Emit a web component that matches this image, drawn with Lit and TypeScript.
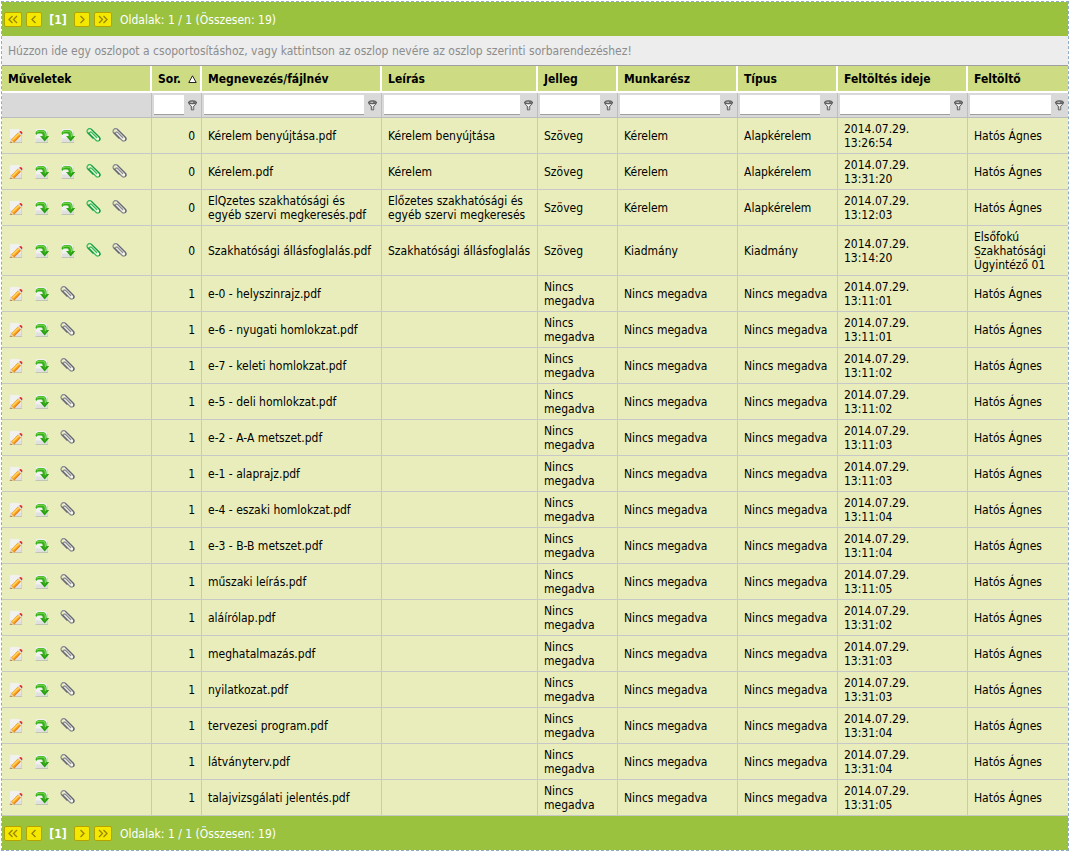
import { LitElement, html, css, svg, nothing } from "lit";
import { customElement, property } from "lit/decorators.js";

interface FileRow {
  order: number;
  name: string;
  description: string;
  kind: string;
  part: string;
  type: string;
  date: string;
  time: string;
  uploader: string;
}

interface Column {
  label: string;
  width: number;
  sorted?: boolean;
  filter?: boolean;
}

const COLUMNS: Column[] = [
  { label: "Műveletek", width: 150 },
  { label: "Sor.", width: 50, sorted: true, filter: true },
  { label: "Megnevezés/fájlnév", width: 180, filter: true },
  { label: "Leírás", width: 156, filter: true },
  { label: "Jelleg", width: 80, filter: true },
  { label: "Munkarész", width: 120, filter: true },
  { label: "Típus", width: 100, filter: true },
  { label: "Feltöltés ideje", width: 130, filter: true },
  { label: "Feltöltő", width: 100, filter: true },
];

const USER = "Hatós Ágnes";
const NONE = "Nincs megadva";

const main = (name: string, description: string, part: string, type: string, time: string, uploader = USER): FileRow => ({
  order: 0, name, description, kind: "Szöveg", part, type, date: "2014.07.29.", time, uploader,
});

const attachment = (name: string, time: string): FileRow => ({
  order: 1, name, description: "", kind: NONE, part: NONE, type: NONE, date: "2014.07.29.", time, uploader: USER,
});

const ROWS: FileRow[] = [
  main("Kérelem benyújtása.pdf", "Kérelem benyújtása", "Kérelem", "Alapkérelem", "13:26:54"),
  main("Kérelem.pdf", "Kérelem", "Kérelem", "Alapkérelem", "13:31:20"),
  main("ElQzetes szakhatósági és egyéb szervi megkeresés.pdf", "Előzetes szakhatósági és egyéb szervi megkeresés", "Kérelem", "Alapkérelem", "13:12:03"),
  main("Szakhatósági állásfoglalás.pdf", "Szakhatósági állásfoglalás", "Kiadmány", "Kiadmány", "13:14:20", "Elsőfokú Szakhatósági Ügyintéző 01"),
  attachment("e-0 - helyszinrajz.pdf", "13:11:01"),
  attachment("e-6 - nyugati homlokzat.pdf", "13:11:01"),
  attachment("e-7 - keleti homlokzat.pdf", "13:11:02"),
  attachment("e-5 - deli homlokzat.pdf", "13:11:02"),
  attachment("e-2 - A-A metszet.pdf", "13:11:03"),
  attachment("e-1 - alaprajz.pdf", "13:11:03"),
  attachment("e-4 - eszaki homlokzat.pdf", "13:11:04"),
  attachment("e-3 - B-B metszet.pdf", "13:11:04"),
  attachment("műszaki leírás.pdf", "13:11:05"),
  attachment("aláírólap.pdf", "13:31:02"),
  attachment("meghatalmazás.pdf", "13:31:03"),
  attachment("nyilatkozat.pdf", "13:31:03"),
  attachment("tervezesi program.pdf", "13:31:04"),
  attachment("látványterv.pdf", "13:31:04"),
  attachment("talajvizsgálati jelentés.pdf", "13:31:05"),
];

const page = svg`
  <path d="M2 1.500Q2 1 2.500 1H11L13.500 3.500V14.500H1.500Z" fill="#f1f1f0"/>
  <path d="M2 10.500H13.500V14H1.700Z" fill="#e0e0e0"/>
  <path d="M1.500 14.500H14" stroke="#c2c4b4"/>
  <path d="M13.500 3.500V14" stroke="#d4d5cc"/>`;

const editIcon = html`<svg viewBox="0 0 16 16" width="16" height="16" aria-hidden="true">
  ${page}
  <path d="M3.200 11.400L10 4.600L12.900 7.500L6.100 14.200L2.400 15Z" fill="#f79a18"/>
  <path d="M4 11.500L10.400 5.100L11.500 6.200L5.100 12.600Z" fill="#ffd45a"/>
  <path d="M6 14.200L12.800 7.500" stroke="#d9700c" stroke-width=".8"/>
  <path d="M10 4.600L11 3.600L13.900 6.500L12.900 7.500Z" fill="#dcdce6"/>
  <path d="M11.200 3.800L12 3.200Q12.800 2.800 13.600 3.600L14.100 4.200Q14.800 5.200 13.900 6.500Z" fill="#e02b2b"/>
  <path d="M3.300 11.600L2.400 15L5.900 14.200Z" fill="#f0d3a0"/>
  <path d="M2.800 13.600L2.400 15.100L4 14.800Z" fill="#7a5a35"/>
</svg>`;

const downloadIcon = html`<svg viewBox="0 0 16 16" width="16" height="16" aria-hidden="true">
  ${page}
  <path d="M1.500 5.500Q2 2 5.500 2H8Q12.600 2 12.600 7V8H15.200L10.700 13.400L6 8H8.600V7Q8.600 5.600 7 5.600H4.500Q3 5.600 2.400 7Z" fill="#35ad18"/>
  <path d="M2.700 4.400Q3.500 3.200 5.500 3.200H8Q11.300 3.400 11.400 7.500V9" fill="none" stroke="#74d64c" stroke-width="1.200"/>
  <path d="M8 9L10.700 12.200L13.700 8.700" fill="none" stroke="#1f9210" stroke-width=".9"/>
</svg>`;

const clipIcon = (dark: string, mid: string) => html`<svg viewBox="0 0 16 16" width="16" height="16" aria-hidden="true">
  <g transform="rotate(-45 7.500 7)" fill="none" stroke-linecap="round">
    <path d="M6.600 3V11.500Q6.600 13 7.700 13Q8.900 13 8.900 11.500V1.500" stroke="#f6f8ee" stroke-width="2"/>
    <path d="M5 9V1.600Q5 -.9 7.500 -.9Q10 -.9 10 1.600V12.300Q10 14.900 7.800 14.900Q5.500 14.900 5.500 12.500V4Q5.500 2.500 6.700 2.500Q8 2.500 8 4V11" stroke="${mid}" stroke-width="1.300"/>
    <path d="M5 9V1.600M10 1.800V12.300Q10 14.900 7.800 14.900" stroke="${dark}" stroke-width="1.100"/>
  </g>
</svg>`;

const funnelIcon = html`<svg viewBox="0 0 9 11" width="9" height="11" aria-hidden="true">
  <path d="M.6 2.500Q.6 4.500 3.300 6V9.800H5.700V6Q8.400 4.500 8.400 2.500Z" fill="#fff" stroke="#555"/>
  <ellipse cx="4.500" cy="2.300" rx="4" ry="1.600" fill="#777" stroke="#444" stroke-width=".8"/>
  <path d="M2.500 2.300H5" stroke="#d0d0d0"/>
  <path d="M5 6.500V9.500" stroke="#999"/>
</svg>`;

@customElement("grid-pager")
export class GridPager extends LitElement {
  @property({ type: Number }) total = 0;

  static styles = css`
    :host {
      display: flex;
      align-items: center;
      gap: 4px;
      height: 34px;
      padding: 0 2px;
      background: #9bc23f;
      color: #fff;
    }
    .step {
      box-sizing: border-box;
      display: flex;
      align-items: center;
      justify-content: center;
      width: 16px;
      height: 15px;
      padding: 0;
      border: 1px solid #b5a300;
      border-radius: 2px;
      background: #f5e800;
      color: #968500;
      cursor: pointer;
    }
    .double {
      width: 18px;
    }
    .current {
      width: 24px;
      text-align: center;
      font-weight: bold;
    }
    .summary {
      margin-left: 4px;
    }
    .current,
    .summary {
      padding-top: 1px;
    }
  `;

  private step(label: string, d: string, double = false) {
    return html`<button type="button" class="step ${double ? "double" : ""}" aria-label=${label}>
      <svg viewBox="0 0 12 9" width="12" height="9" aria-hidden="true">
        <path d=${d} fill="none" stroke="currentColor" stroke-width="1.300" />
      </svg>
    </button>`;
  }

  render() {
    return html`
      ${this.step("Első oldal", "M5.500 1L2 4.500L5.500 8M10 1L6.500 4.500L10 8", true)}
      ${this.step("Előző oldal", "M7.500 1L4 4.500L7.500 8")}
      <span class="current">[1]</span>
      ${this.step("Következő oldal", "M4.500 1L8 4.500L4.500 8")}
      ${this.step("Utolsó oldal", "M2 1L5.500 4.500L2 8M6.500 1L10 4.500L6.500 8", true)}
      <span class="summary">Oldalak: 1 / 1 (Összesen: ${this.total})</span>
    `;
  }
}

@customElement("app-root")
export class AppRoot extends LitElement {
  static styles = css`
    :host {
      display: block;
      padding: 1px 0 0 1px;
      background: #fff;
      color: #000;
      font: 12px/14px "DejaVu Sans Condensed", Tahoma, "DejaVu Sans", sans-serif;
    }
    .grid {
      border: 1px dashed #8fabc6;
    }
    .group-panel {
      padding: 8px 6px 7px;
      border-bottom: 1px solid #9f9f9f;
      background: #ededed;
      color: #8c8c8c;
    }
    table {
      width: 100%;
      table-layout: fixed;
      border-collapse: separate;
      border-spacing: 0;
    }
    th {
      box-sizing: border-box;
      height: 27px;
      padding: 0;
      border-right: 2px solid #fff;
      border-bottom: 2px solid #fff;
      background: #cddc82;
    }
    .sort {
      display: flex;
      align-items: center;
      justify-content: space-between;
      width: 100%;
      padding: 0 3px 0 6px;
      border: 0;
      background: none;
      color: inherit;
      font: inherit;
      font-weight: bold;
      text-align: left;
      white-space: nowrap;
      cursor: pointer;
    }
    td {
      box-sizing: border-box;
      padding: 4px 6px 3px;
      border-right: 1px solid #c8c8c8;
      border-bottom: 1px solid #c8c8c8;
      background: #e8edbb;
      vertical-align: middle;
    }
    th:last-child,
    td:last-child {
      border-right: 0;
    }
    .filters td {
      height: 25px;
      padding: 2px 0 2px 2px;
      border-color: #bdbdbd;
      background: #d9d9d9;
    }
    .filter {
      display: flex;
      align-items: center;
    }
    .filter input {
      box-sizing: border-box;
      flex: 1;
      min-width: 0;
      height: 20px;
      padding: 0 2px;
      border: 0;
      border-bottom: 1px solid #9f9f9f;
      background: #fff;
      font: inherit;
    }
    .funnel {
      display: flex;
      justify-content: center;
      width: 17px;
      padding: 0;
      border: 0;
      background: none;
      cursor: pointer;
    }
    .order {
      text-align: right;
    }
    .when span {
      display: block;
    }
    .actions {
      display: flex;
      gap: 10px;
    }
    .action {
      display: block;
      width: 16px;
      height: 16px;
      padding: 0;
      border: 0;
      background: none;
      cursor: pointer;
    }
    svg {
      display: block;
    }
  `;

  private action(label: string, icon: unknown) {
    return html`<button type="button" class="action" aria-label=${label}>${icon}</button>`;
  }

  private row(r: FileRow) {
    const isMain = r.order === 0;
    return html`<tr>
      <td>
        <div class="actions">
          ${this.action("Szerkesztés", editIcon)}
          ${this.action("Letöltés", downloadIcon)}
          ${isMain ? this.action("Letöltés aláírással", downloadIcon) : nothing}
          ${isMain ? this.action("Melléklet hozzáadása", clipIcon("#159a3a", "#3dbb58")) : nothing}
          ${this.action("Mellékletek", clipIcon("#66666c", "#8c8c92"))}
        </div>
      </td>
      <td class="order">${r.order}</td>
      <td>${r.name}</td>
      <td>${r.description}</td>
      <td>${r.kind}</td>
      <td>${r.part}</td>
      <td>${r.type}</td>
      <td class="when"><span>${r.date}</span><span>${r.time}</span></td>
      <td>${r.uploader}</td>
    </tr>`;
  }

  render() {
    return html`
      <div class="grid">
        <grid-pager .total=${ROWS.length}></grid-pager>
        <div class="group-panel">
          Húzzon ide egy oszlopot a csoportosításhoz, vagy kattintson az oszlop nevére az oszlop szerinti sorbarendezéshez!
        </div>
        <table>
          <colgroup>
            ${COLUMNS.map((c) => html`<col style="width:${c.width}px" />`)}
          </colgroup>
          <thead>
            <tr>
              ${COLUMNS.map(
                (c) => html`<th scope="col">
                  <button type="button" class="sort">
                    ${c.label}
                    ${c.sorted
                      ? html`<svg viewBox="0 0 9 8" width="9" height="8" aria-hidden="true">
                          <path d="M4.500 .8L8.200 7.500H.8Z" fill="#fff" stroke="#222" />
                        </svg>`
                      : nothing}
                  </button>
                </th>`,
              )}
            </tr>
            <tr class="filters">
              ${COLUMNS.map(
                (c) => html`<td>
                  ${c.filter
                    ? html`<div class="filter">
                        <input type="text" aria-label="${c.label} szűrő" />
                        <button type="button" class="funnel" aria-label="${c.label} szűrési feltétel">${funnelIcon}</button>
                      </div>`
                    : nothing}
                </td>`,
              )}
            </tr>
          </thead>
          <tbody>
            ${ROWS.map((r) => this.row(r))}
          </tbody>
        </table>
        <grid-pager .total=${ROWS.length}></grid-pager>
      </div>
    `;
  }
}
